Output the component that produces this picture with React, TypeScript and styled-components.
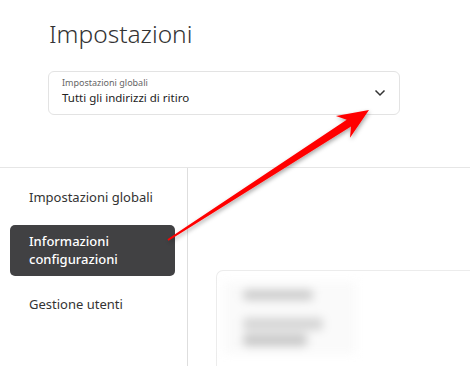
import React from "react";
import styled, { createGlobalStyle } from "styled-components";

const Global = createGlobalStyle`
  html, body { margin: 0; padding: 0; background: #fff; }
  body { font-family: "Noto Sans", "Open Sans", sans-serif; color: #2b2b2b; overflow: hidden; }
  * { box-sizing: border-box; }
`;

const Page = styled.div`
  position: relative;
  width: 470px;
  height: 366px;
  overflow: hidden;
  display: flex;
  flex-direction: column;
`;

const Header = styled.header`
  flex: 0 0 167px;
  padding: 16px 70px 0 48px;
`;

const Title = styled.h1`
  margin: 0 0 19px 1px;
  font-size: 24.5px;
  font-weight: 300;
  line-height: 36px;
  color: #333;
`;

const Select = styled.div`
  height: 44px;
  border: 1px solid #e3e3e3;
  border-radius: 6px;
  display: flex;
  align-items: center;
  padding: 0 13px;
`;

const SelectText = styled.div`
  flex: 1;
  display: flex;
  flex-direction: column;
`;

const SelectLabel = styled.span`
  font-size: 9px;
  line-height: 12px;
  color: #666;
  margin-top: -2px;
`;

const SelectValue = styled.span`
  font-size: 11.5px;
  line-height: 18px;
  color: #222;
`;

const Body = styled.div`
  flex: 1;
  display: grid;
  grid-template-columns: 188px 1fr;
  border-top: 1px solid #e6e6e6;
`;

const Sidebar = styled.nav`
  border-right: 1px solid #dedede;
  padding: 12px 12px 0 10px;
  display: flex;
  flex-direction: column;
  gap: 11px;
`;

const NavItem = styled.div<{ $active?: boolean }>`
  padding: 8px 19px;
  font-size: 13px;
  line-height: 18px;
  white-space: nowrap;
  border-radius: 5px;
  color: ${(p) => (p.$active ? "#fff" : "#333")};
  background: ${(p) => (p.$active ? "#414143" : "transparent")};
  font-weight: ${(p) => (p.$active ? 500 : 400)};
  padding-top: ${(p) => (p.$active ? "7px" : "8px")};
  padding-bottom: 8px;
`;

const Content = styled.div`
  padding: 102px 0 0 28px;
`;

const Card = styled.div`
  height: 200px;
  border: 1px solid #ececec;
  border-right: none;
  border-radius: 7px 0 0 0;
  padding: 11px 0 0 6px;
`;

const Blurred = styled.div`
  width: 133px;
  height: 72px;
  background: #fafafa;
  filter: blur(5px);
  padding: 8px 0 0 20px;
  display: flex;
  flex-direction: column;
`;

const BlurBar = styled.div<{ $w: number; $h: number; $mt: number; $c: string }>`
  width: ${(p) => p.$w}px;
  height: ${(p) => p.$h}px;
  margin-top: ${(p) => p.$mt}px;
  background: ${(p) => p.$c};
  border-radius: 4px;
`;

const Overlay = styled.svg`
  position: absolute;
  left: 0;
  top: 0;
  pointer-events: none;
`;

function arrowPoints() {
  const tail = { x: 168, y: 240 };
  const tip = { x: 369, y: 110 };
  const dx = tip.x - tail.x;
  const dy = tip.y - tail.y;
  const len = Math.hypot(dx, dy);
  const u = { x: dx / len, y: dy / len };
  const n = { x: -u.y, y: u.x };
  const at = (d: number, w: number) => ({
    x: tip.x - u.x * d + n.x * w,
    y: tip.y - u.y * d + n.y * w,
  });
  const pts = [
    at(len, 0.9),
    at(24, 4),
    at(31, 13),
    tip,
    at(31, -13),
    at(24, -4),
    at(len, -0.9),
  ];
  return pts.map((p) => `${p.x.toFixed(1)},${p.y.toFixed(1)}`).join(" ");
}

export default function App() {
  return (
    <>
      <Global />
      <Page>
        <Header>
          <Title>Impostazioni</Title>
          <Select>
            <SelectText>
              <SelectLabel>Impostazioni globali</SelectLabel>
              <SelectValue>Tutti gli indirizzi di ritiro</SelectValue>
            </SelectText>
            <svg width="12" height="8" viewBox="0 0 12 8">
              <path d="M1.5 1.5 L6 6 L10.5 1.5" fill="none" stroke="#333" strokeWidth="1.5" />
            </svg>
          </Select>
        </Header>
        <Body>
          <Sidebar>
            <NavItem>Impostazioni globali</NavItem>
            <NavItem $active>
              Informazioni
              <br />
              configurazioni
            </NavItem>
            <NavItem>Gestione utenti</NavItem>
          </Sidebar>
          <Content>
            <Card>
              <Blurred>
                <BlurBar $w={70} $h={10} $mt={0} $c="#cacaca" />
                <BlurBar $w={80} $h={12} $mt={18} $c="#d4d4d4" />
                <BlurBar $w={64} $h={12} $mt={4} $c="#c8c8c8" />
              </Blurred>
            </Card>
          </Content>
        </Body>
        <Overlay width="470" height="366" viewBox="0 0 470 366">
          <defs>
            <filter id="sh" x="-20%" y="-20%" width="140%" height="140%">
              <feDropShadow dx="1" dy="2" stdDeviation="2" floodColor="#000" floodOpacity="0.35" />
            </filter>
          </defs>
          <polygon points={arrowPoints()} fill="#ff0000" filter="url(#sh)" />
        </Overlay>
      </Page>
    </>
  );
}
